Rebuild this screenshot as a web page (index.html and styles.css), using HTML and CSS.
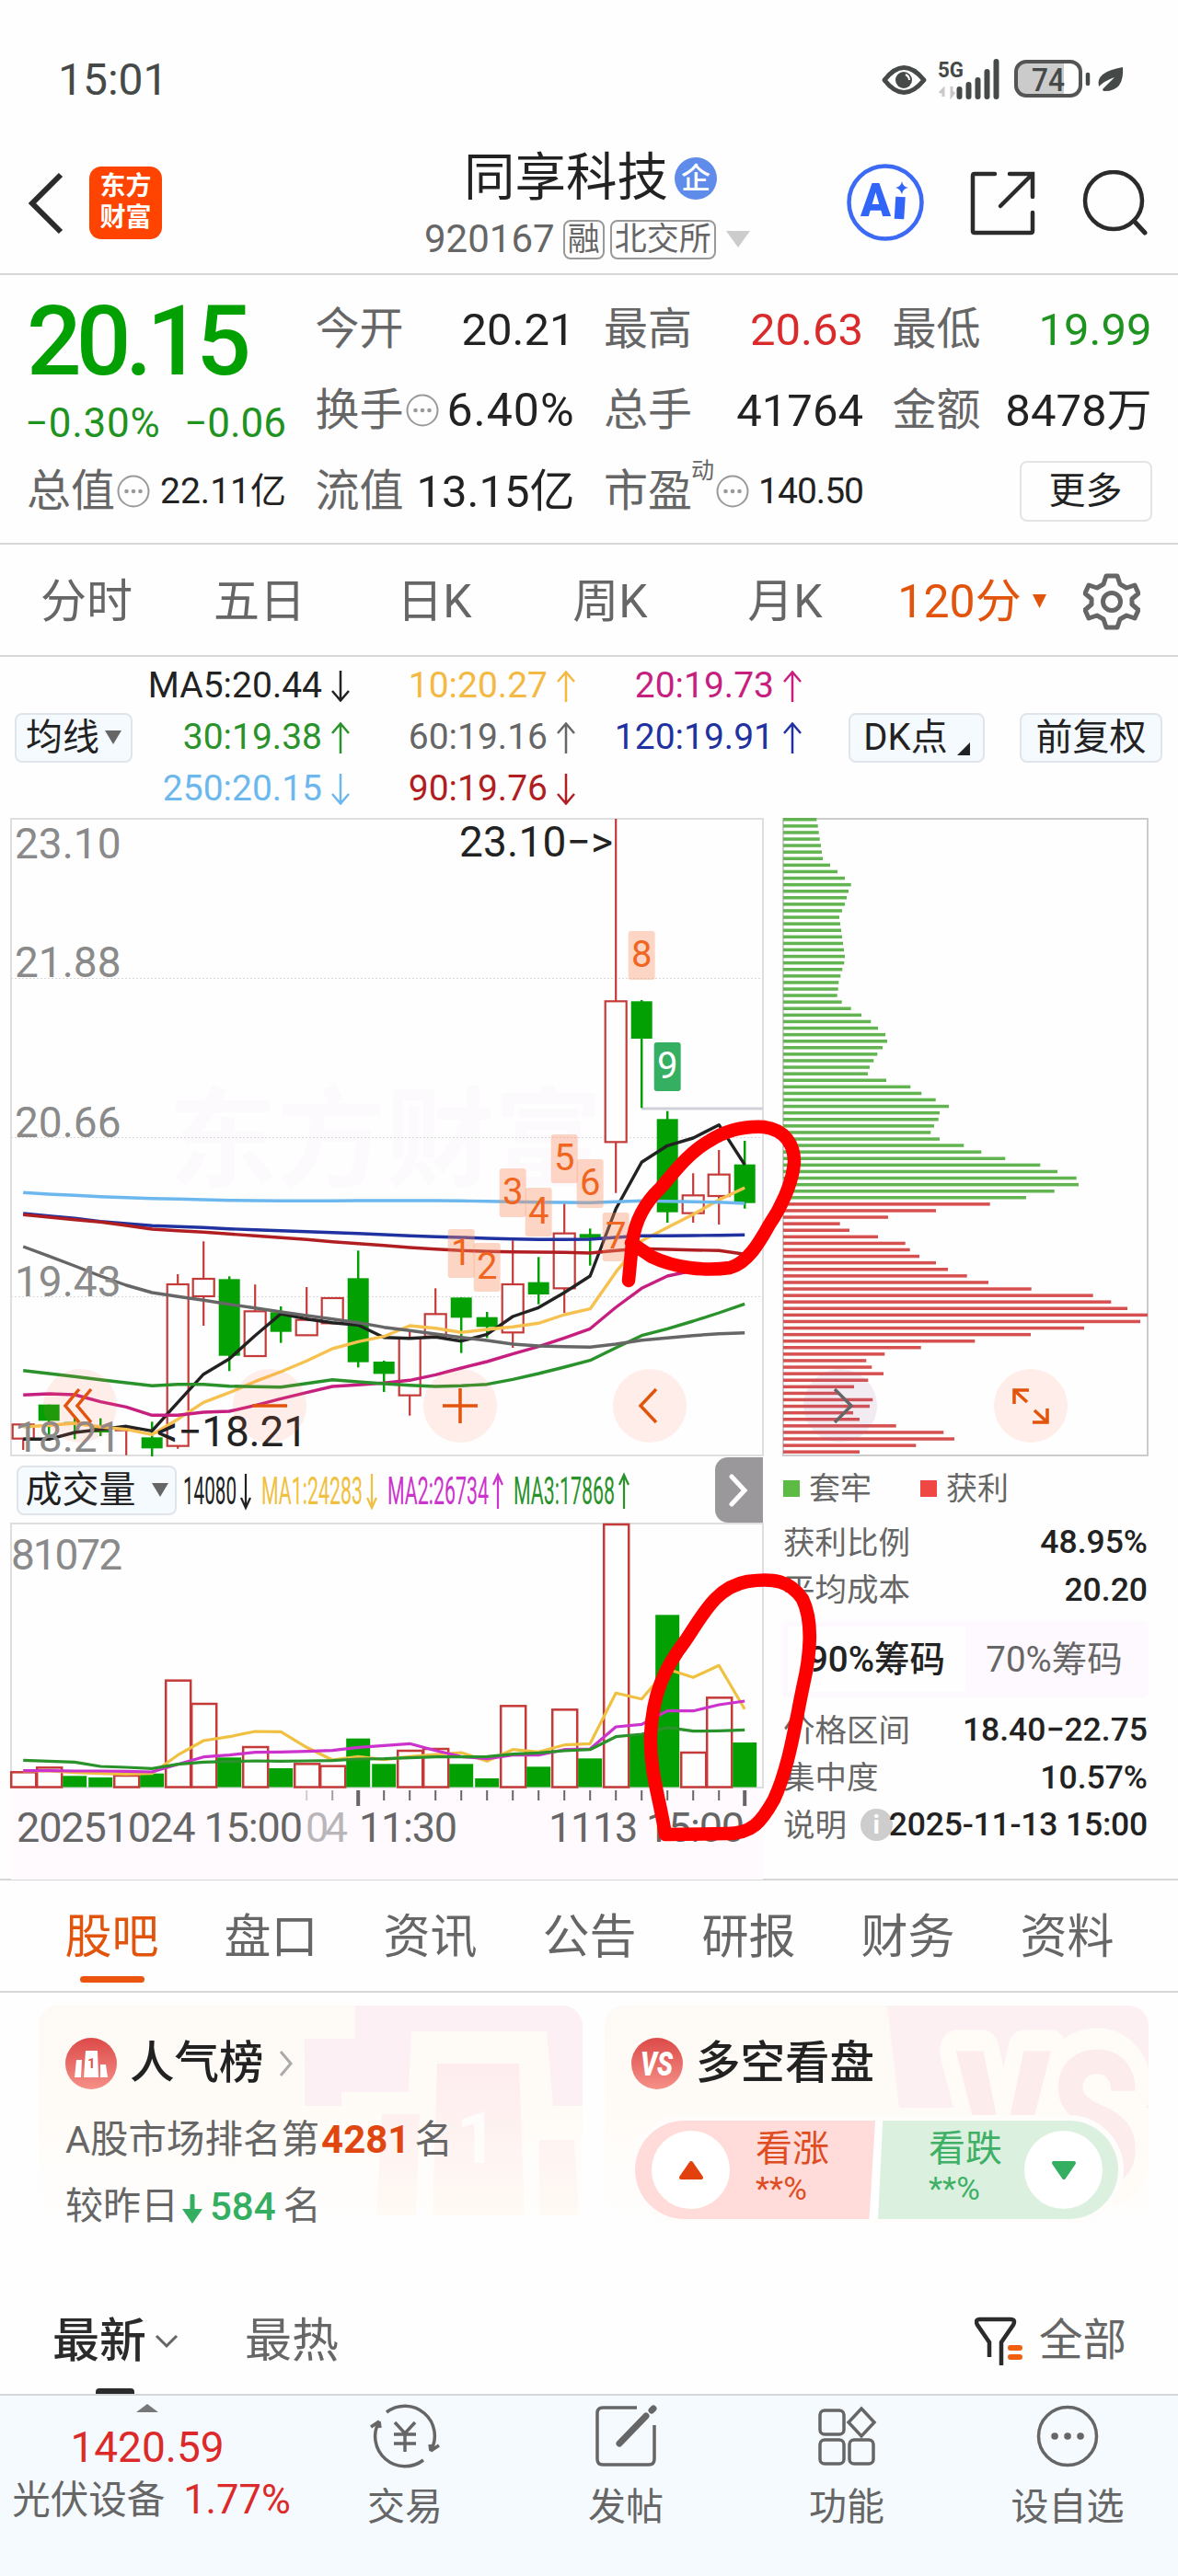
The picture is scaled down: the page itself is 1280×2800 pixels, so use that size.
FILE: index.html
```html
<!DOCTYPE html>
<html lang="zh-CN">
<head>
  <meta charset="UTF-8">
  <meta name="viewport" content="width=device-width, initial-scale=1">
  <title>同享科技 920167</title>
  <link rel="stylesheet" href="styles.css">
</head>
<body>
  <!-- Shared symbols -->
  <svg class="defs" width="0" height="0">
    <symbol id="down" viewBox="0 0 20 34"><path d="M10 0V32M1 22L10 32.500L19 22" fill="none" stroke="currentColor" stroke-width="2.500"/></symbol>
    <symbol id="up" viewBox="0 0 20 34"><path d="M10 34V2M1 12L10 1.500L19 12" fill="none" stroke="currentColor" stroke-width="2.500"/></symbol>
    <symbol id="dots" viewBox="0 0 36 36">
      <circle cx="18" cy="18" r="16.500" fill="none" stroke="#999" stroke-width="2"/>
      <circle cx="10.500" cy="18" r="2.300" fill="#999"/><circle cx="18" cy="18" r="2.300" fill="#999"/><circle cx="25.500" cy="18" r="2.300" fill="#999"/>
    </symbol>
  </svg>

  <div class="status-bar">
    <span class="clock">15:01</span>
    <svg width="270" height="50" viewBox="955 60 270 50">
      <path d="M961 87Q982 60 1004 87Q982 114 961 87Z" fill="none" stroke="#454947" stroke-width="5" stroke-linejoin="round"/>
      <circle cx="982" cy="87" r="9" fill="#454947"/><path d="M984 81q4 2 4 6" stroke="#fff" stroke-width="2" fill="none"/>
      <text x="1019" y="84" class="net" textLength="28" lengthAdjust="spacingAndGlyphs">5G</text>
      <path d="M1021 101l4-4v8M1034 94v10l3-4" stroke="#cbc6ca" stroke-width="3" fill="none"/>
      <path d="M1042.500 97V105M1052.500 92V105M1062.500 87V105M1072.500 78V105M1082.500 67V105" stroke="#454947" stroke-width="6" stroke-linecap="round"/>
      <rect x="1104" y="68" width="70" height="37" rx="11" fill="#fff"/>
      <path d="M1115 68h41v37h-41q-11 0-11-11v-15q0-11 11-11z" fill="#cbcbcb"/>
      <rect x="1104" y="67" width="70" height="37" rx="11" fill="none" stroke="#555" stroke-width="4"/>
      <text x="1121" y="99" class="battery" textLength="36" lengthAdjust="spacingAndGlyphs">74</text>
      <path d="M1182 81V91" stroke="#454947" stroke-width="4.500" stroke-linecap="round"/>
      <path d="M1194 94Q1190 78 1220 73Q1222 100 1199 99L1198 97L1211 84Q1200 88 1194 94Z" fill="#454947"/>
    </svg>
  </div>

  <header class="top-bar">
    <div class="top-left">
      <svg width="40" height="70" viewBox="0 0 40 70"><path d="M36 5L5 36L36 67" fill="none" stroke="#2b2b2b" stroke-width="6"/></svg>
      <div class="logo">东方<br>财富</div>
    </div>
    <div class="title">
      <div class="stock-name">同享科技<span class="badge-qi">企</span></div>
      <div class="stock-code">
        <span>920167</span><span class="tag">融</span><span class="tag">北交所</span>
        <svg width="26" height="18" viewBox="0 0 26 18"><path d="M0 0H26L13 18Z" fill="#ccc"/></svg>
      </div>
    </div>
    <div class="top-icons">
      <svg width="86" height="86" viewBox="0 0 86 86">
        <circle cx="42" cy="42" r="39.500" fill="none" stroke="#3c69f5" stroke-width="4.500"/>
        <text x="15" y="57" class="ai" textLength="33" lengthAdjust="spacingAndGlyphs">A</text>
        <path d="M58.500 36L57 60" stroke="#3165f8" stroke-width="10.500"/>
        <path d="M60 19Q61 25 67 26Q61 27 60 33Q58 27 53 26Q59 25 60 19Z" fill="#3165f8"/>
      </svg>
      <svg width="72" height="72" viewBox="0 0 72 72"><path d="M27 4H5Q3 4 3 6V66Q3 68 5 68H66Q68 68 68 66V46M43 4H68V29M66 6L33 39" fill="none" stroke="#2b2b2b" stroke-width="4.500" stroke-linecap="round"/></svg>
      <svg width="74" height="74" viewBox="0 0 74 74"><circle cx="35" cy="33" r="31" fill="none" stroke="#2b2b2b" stroke-width="4.500"/><path d="M57 55L69 68" stroke="#2b2b2b" stroke-width="5" stroke-linecap="round"/></svg>
    </div>
  </header>

  <section class="quote">
    <div class="price-cell">
      <div class="price">20.15</div>
      <div class="change"><span>−0.30%</span><span>−0.06</span></div>
    </div>
    <div class="stat"><span>今开</span><b>20.21</b></div>
    <div class="stat"><span>最高</span><b class="red">20.63</b></div>
    <div class="stat"><span>最低</span><b class="green">19.99</b></div>
    <div class="stat"><span>换手<svg class="more-dots"><use href="#dots"/></svg></span><b class="wide">6.40%</b></div>
    <div class="stat"><span>总手</span><b>41764</b></div>
    <div class="stat"><span>金额</span><b>8478万</b></div>
    <div class="stat"><span>总值<svg class="more-dots"><use href="#dots"/></svg></span><b class="small">22.11亿</b></div>
    <div class="stat"><span>流值</span><b>13.15亿</b></div>
    <div class="stat"><span>市盈<sup>动</sup><svg class="more-dots"><use href="#dots"/></svg></span><b class="small tight">140.50</b></div>
    <div class="stat end"><button class="more-btn">更多</button></div>
  </section>

  <nav class="period-tabs">
    <span>分时</span><span>五日</span><span>日K</span><span>周K</span><span>月K</span>
    <span class="active">120分<svg width="15" height="15" viewBox="0 0 15 15"><path d="M0 0H15L7.500 15Z" fill="#e2530c"/></svg></span>
    <svg width="62" height="62" viewBox="-31 -31 62 62">
      <path fill="none" stroke="#666" stroke-width="5" stroke-linejoin="round" d="M-6 -28H6L9 -19L16 -15L25 -18L29 -9L22 -3V3L29 9L25 18L16 15L9 19L6 28H-6L-9 19L-16 15L-25 18L-29 9L-22 3V-3L-29 -9L-25 -18L-16 -15L-9 -19Z"/>
      <circle r="9.500" fill="none" stroke="#666" stroke-width="5"/>
    </svg>
  </nav>

  <section class="charts">
    <div class="ma-bar">
      <button class="chip">均线<i class="tri"></i></button>
      <div class="ma-list">
        <span class="ma5">MA5:20.44<svg><use href="#down"/></svg></span>
        <span class="ma10">10:20.27<svg><use href="#up"/></svg></span>
        <span class="ma20">20:19.73<svg><use href="#up"/></svg></span>
        <span class="ma30">30:19.38<svg><use href="#up"/></svg></span>
        <span class="ma60">60:19.16<svg><use href="#up"/></svg></span>
        <span class="ma120">120:19.91<svg><use href="#up"/></svg></span>
        <span class="ma250">250:20.15<svg><use href="#down"/></svg></span>
        <span class="ma90">90:19.76<svg><use href="#down"/></svg></span>
      </div>
      <button class="chip dk">DK点<i class="corner"></i></button>
      <button class="chip fq">前复权</button>
    </div>

    <div class="chart-grid">
      <div class="left-col">
        <svg id="kline" width="838" height="695" viewBox="0 888 838 695"></svg>
        <div class="vol-bar">
          <button class="chip">成交量<i class="tri"></i></button>
          <svg class="vol-ma" width="490" height="50" viewBox="198 1593 490 50">
            <g fill="#222" color="#222"><text x="199" y="1633" textLength="58" lengthAdjust="spacingAndGlyphs">14080</text><path d="M267 1600V1637M262 1626L267 1637L272 1626"/></g>
            <g fill="#f0c040" color="#f0c040"><text x="284" y="1633" textLength="110" lengthAdjust="spacingAndGlyphs">MA1:24283</text><path d="M404 1600V1637M399 1626L404 1637L409 1626"/></g>
            <g fill="#cc33cc" color="#cc33cc"><text x="421" y="1633" textLength="110" lengthAdjust="spacingAndGlyphs">MA2:26734</text><path d="M541 1638V1601M536 1612L541 1601L546 1612"/></g>
            <g fill="#2a922a" color="#2a922a"><text x="558" y="1633" textLength="110" lengthAdjust="spacingAndGlyphs">MA3:17868</text><path d="M678 1638V1601M673 1612L678 1601L683 1612"/></g>
          </svg>
          <button class="expand"><svg width="22" height="36" viewBox="0 0 22 36"><path d="M3 3L17 18L3 33" fill="none" stroke="#fff" stroke-width="5" stroke-linecap="round"/></svg></button>
        </div>
        <svg id="volume" width="838" height="388" viewBox="0 1654 838 388"></svg>
      </div>

      <div class="right-col">
        <svg id="chips" width="402" height="695" viewBox="848 888 402 695"></svg>
        <div class="legend"><i class="sq g"></i><span>套牢</span><i class="sq r"></i><span>获利</span></div>
        <div class="info"><span>获利比例</span><b>48.95%</b></div>
        <div class="info"><span>平均成本</span><b>20.20</b></div>
        <div class="seg"><span class="on">90%筹码</span><span>70%筹码</span></div>
        <div class="info"><span>价格区间</span><b>18.40−22.75</b></div>
        <div class="info"><span>集中度</span><b>10.57%</b></div>
        <div class="info"><span>说明</span><i class="tip">i</i><b class="time">2025-11-13 15:00</b></div>
      </div>
    </div>

    <!-- Hand-drawn marks over both charts -->
    <svg class="ink" width="1280" height="1330" viewBox="0 713 1280 1330">
      <path d="M683 1391L687 1350C690 1325 702 1305 718 1290C732 1274 748 1252 771 1239C790 1227 812 1223 830 1224C853 1227 863 1243 863 1262C861 1287 847 1314 836 1330C825 1350 812 1372 793 1377C765 1381 733 1377 708 1365L686 1350"/>
      <path d="M723 1993C716 1950 706 1925 707 1885C709 1840 722 1812 745 1782C764 1754 778 1724 812 1718C841 1714 858 1717 872 1737C884 1762 880 1800 873 1830C864 1872 858 1918 841 1955C827 1980 817 1992 790 1992L723 1993"/>
    </svg>
  </section>

  <nav class="info-tabs">
    <span class="active">股吧</span><span>盘口</span><span>资讯</span><span>公告</span><span>研报</span><span>财务</span><span>资料</span>
  </nav>

  <section class="cards">
    <div class="card">
      <svg class="card-art" width="591" height="240" viewBox="0 0 591 240">
        <defs>
          <linearGradient id="fade" x2="0" y2="1"><stop stop-color="#fdecee"/><stop offset="1" stop-color="#fffaf4"/></linearGradient>
          <linearGradient id="redg" x2="0" y2="1"><stop stop-color="#dc4a48"/><stop offset="1" stop-color="#f59088"/></linearGradient>
        </defs>
        <path d="M344 0H591V109H559L552 28H405L402 94H329V109H289V36H344Z" fill="#fdf0f4"/>
        <path d="M433 63H522L528 228H428ZM373 118H414L410 228H367ZM544 146H582L587 228H544Z" fill="url(#fade)"/>
        <text x="454" y="171" class="art-num">1</text>
      </svg>
      <h3>
        <svg width="56" height="56" viewBox="0 0 56 56"><circle cx="28" cy="28" r="28" fill="url(#redg)"/><path d="M12 24h6l-1 19h-7zM38 29h6l2 14h-8zM22 14h13l1 29H20z" fill="#fff"/><text x="24" y="33" class="icon-num">1</text></svg>
        人气榜
        <svg class="arrow" width="16" height="28" viewBox="0 0 16 28"><path d="M2 1L13 14L2 27" fill="none" stroke="#aaa" stroke-width="3"/></svg>
      </h3>
      <p class="rank">A股市场排名第<b>4281</b>名</p>
      <p class="diff">较昨日<svg width="24" height="32" viewBox="0 0 24 32"><path d="M12 2V22" stroke="#34ae60" stroke-width="5" stroke-linecap="round"/><path d="M1 16H23L12 32Z" fill="#34ae60"/></svg><b>584</b>名</p>
    </div>
    <div class="card">
      <svg class="card-art" width="591" height="240" viewBox="0 0 591 240">
        <path d="M307 0H591V111H320Z" fill="#fdf0f3"/>
        <text x="382" y="195" class="art-vs" textLength="200" lengthAdjust="spacingAndGlyphs">VS</text>
      </svg>
      <h3>
        <svg width="56" height="56" viewBox="0 0 56 56"><circle cx="28" cy="28" r="28" fill="url(#redg)"/><text x="10" y="41" class="icon-vs" textLength="35" lengthAdjust="spacingAndGlyphs">VS</text></svg>
        多空看盘
      </h3>
      <div class="vote">
        <div class="up"><i><svg width="28" height="22" viewBox="0 0 28 22"><path d="M14 3L25 19H3Z" fill="#e2410e" stroke="#e2410e" stroke-width="4" stroke-linejoin="round"/></svg></i><span>看涨<small>**%</small></span></div>
        <div class="down"><span>看跌<small>**%</small></span><i><svg width="28" height="22" viewBox="0 0 28 22"><path d="M14 19L3 3H25Z" fill="#34ae60" stroke="#34ae60" stroke-width="4" stroke-linejoin="round"/></svg></i></div>
      </div>
    </div>
  </section>

  <section class="feed-bar">
    <span class="newest">最新<svg width="26" height="16" viewBox="0 0 26 16"><path d="M2 2L13 13L24 2" fill="none" stroke="#666" stroke-width="3"/></svg></span>
    <span class="hottest">最热</span>
    <span class="filter">
      <svg width="52" height="54" viewBox="0 0 52 54"><path d="M16 44V28L3 9Q0 3 6 3H39Q45 3 42 9L29 28V53" fill="none" stroke="#2b2b2b" stroke-width="4.500"/><path d="M39 34H49M39 44H49" stroke="#f0600c" stroke-width="6" stroke-linecap="round"/></svg>
      全部
    </span>
  </section>

  <footer class="bottom-nav">
    <div class="index">
      <svg width="24" height="9" viewBox="0 0 24 9"><path d="M12 0L24 9H0Z" fill="#777"/></svg>
      <b>1420.59</b>
      <p>光伏设备<b>1.77%</b></p>
    </div>
    <div class="nav-item">
      <svg width="80" height="72" viewBox="-40 -36 80 72" class="line">
        <path d="M-20 -26A32.500 32.500 0 0 1 28 16L37 10M28 16L27 9M20 26A32.500 32.500 0 0 1 -28 -16L-37 -10M-28 -16L-27 -9"/>
        <path d="M-11 -15L0 -3L11 -15M0 -3V17M-12 -2H12M-12 8H12"/>
      </svg>
      交易
    </div>
    <div class="nav-item">
      <svg width="80" height="72" viewBox="-40 -36 80 72" class="line">
        <path d="M12 -31H-25Q-31 -31 -31 -25V25Q-31 31 -25 31H25Q31 31 31 25V-12"/>
        <path d="M-7 8L22 -22" stroke-width="7" stroke-linecap="round"/><path d="M28 -28L30 -30" stroke-width="7" stroke-linecap="round"/>
      </svg>
      发帖
    </div>
    <div class="nav-item">
      <svg width="80" height="72" viewBox="-40 -36 80 72" class="line">
        <rect x="-29" y="-28" width="26" height="26" rx="5"/><rect x="-29" y="4" width="26" height="26" rx="5"/><rect x="3" y="4" width="26" height="26" rx="5"/>
        <path d="M16 -30L30 -15L16 0L2 -15Z"/>
      </svg>
      功能
    </div>
    <div class="nav-item">
      <svg width="80" height="72" viewBox="-40 -36 80 72" class="line">
        <circle r="31.500"/><path d="M-14 0h.1M0 0h.1M14 0h.1" stroke-width="7.500" stroke-linecap="round"/>
      </svg>
      设自选
    </div>
  </footer>

  <script src="charts.js"></script>
</body>
</html>
```
FILE: styles.css
```css
:root {
  --text: #222;
  --gray: #666;
  --line: #d5d6d8;
  --up: #d92b2b;
  --down: #1f931f;
  --accent: #e2530c;
}

* {
  box-sizing: border-box;
}

body {
  margin: 0;
  width: 1280px;
  height: 2800px;
  overflow-x: hidden;
  background: #fefefe;
  color: var(--text);
  font-family: Roboto, "Noto Sans CJK SC", sans-serif;
  line-height: 1;
}

svg {
  display: block;
  flex: none;
}

.defs {
  position: absolute;
}

button {
  font: inherit;
  color: inherit;
  padding: 0;
  margin: 0;
  background: none;
}

b {
  font-weight: 400;
}

.red { color: var(--up); }
.green { color: var(--down); }

/* status bar */
.status-bar {
  height: 150px;
  padding: 60px 55px 0 63px;
  display: flex;
  justify-content: space-between;
}

.clock {
  font-size: 48px;
  line-height: 54px;
  color: #454947;
}

.net { font: 700 24px Roboto; fill: #454947; }
.battery { font: 500 35px Roboto; fill: #454947; }

/* top bar */
.top-bar {
  height: 149px;
  border-bottom: 2px solid var(--line);
  display: grid;
  grid-template-columns: 400px 1fr 400px;
}

.top-left {
  display: flex;
  padding: 31px 0 0 30px;
  gap: 27px;
  align-items: flex-start;
}

.top-left > svg {
  margin-top: 4px;
}

.logo {
  width: 79px;
  height: 79px;
  border-radius: 13px;
  background: #fe4400;
  color: #fff;
  font-size: 28px;
  font-weight: 700;
  line-height: 34px;
  text-align: center;
  padding-top: 5px;
}

.title {
  padding-top: 12px;
}

.stock-name {
  display: flex;
  align-items: center;
  font-size: 55.5px;
  line-height: 64px;
  padding-left: 104px;
}

.badge-qi {
  width: 46px;
  height: 46px;
  margin-left: 7px;
  border-radius: 50%;
  background: #5f8cea;
  color: #fff;
  font-size: 32px;
  font-weight: 500;
  line-height: 46px;
  text-align: center;
}

.stock-code {
  display: flex;
  align-items: center;
  margin-top: 9px;
  padding-left: 61px;
  font-size: 42px;
  height: 50px;
  color: var(--gray);
}

.tag {
  height: 43px;
  margin-left: 9px;
  padding: 0 3px;
  border: 2px solid #999;
  border-radius: 8px;
  font-size: 35px;
  line-height: 39px;
}

.tag + .tag {
  margin-left: 6px;
}

.stock-code svg {
  margin-left: 11px;
}

.top-icons {
  display: flex;
  padding: 28px 0 0 40px;
}

.top-icons svg + svg {
  margin: 7px 0 0 48px;
}

.top-icons svg:last-child {
  margin-left: 49px;
}

.ai { font: 900 50px Roboto; fill: #3165f8; }

/* quote */
.quote {
  height: 293px;
  padding: 15px 28px 0 29px;
  border-bottom: 2px solid var(--line);
  display: grid;
  grid-template-columns: repeat(4, 282px);
  grid-template-rows: repeat(3, 88px);
  column-gap: 31.5px;
}

.price-cell {
  grid-row: 1 / 3;
}

.price {
  font-size: 105px;
  font-weight: 500;
  letter-spacing: -6px;
  line-height: 115px;
  color: #02a002;
}

.change {
  display: flex;
  justify-content: space-between;
  margin-left: -2px;
  font-size: 44px;
  line-height: 62px;
  color: var(--down);
}

.change span:first-child {
  letter-spacing: 0.7px;
}

.stat {
  display: flex;
  justify-content: space-between;
  align-items: center;
  font-size: 48px;
  white-space: nowrap;
}

.stat > span {
  display: flex;
  align-items: center;
  color: var(--gray);
}

.stat b {
  font-size: 49px;
}

.stat b.wide {
  font-size: 50px;
  letter-spacing: 1px;
}

.stat b.small {
  font-size: 39px;
}

.stat b.tight {
  letter-spacing: -1px;
}

.stat sup {
  font-size: 25px;
  margin: -46px 0 0 -1px;
}

.more-dots {
  width: 36px;
  height: 36px;
  margin-left: 2px;
}

.end {
  justify-content: flex-end;
}

.more-btn {
  width: 144px;
  height: 66px;
  border: 2px solid #e4e4e6;
  border-radius: 8px;
  font-size: 40px;
}

/* period tabs */
.period-tabs {
  height: 122px;
  padding-top: 3px;
  border-bottom: 2px solid var(--line);
  display: grid;
  grid-template-columns: 188px 188px 192px 190px 190px 216px 88px;
  align-items: center;
  justify-items: center;
  font-size: 50px;
  color: var(--gray);
}

.period-tabs .active {
  display: flex;
  align-items: center;
  gap: 12px;
  color: var(--accent);
}

/* charts */
.charts {
  position: relative;
  height: 1330px;
  border-bottom: 2px solid var(--line);
}

.ink {
  position: absolute;
  left: 0;
  top: 0;
  fill: none;
  stroke: #f00;
  stroke-width: 14.5;
  stroke-linecap: round;
  stroke-linejoin: round;
}

.ma-bar {
  height: 175px;
  padding-left: 16px;
  display: flex;
  align-items: center;
}

.chip {
  height: 54px;
  width: 128px;
  border: 2px solid #dfe5ea;
  border-radius: 8px;
  background: #f5faff;
  font-size: 40px;
  display: flex;
  align-items: center;
  justify-content: center;
  flex: none;
}

.tri {
  margin-left: 6px;
  border: 9px solid transparent;
  border-top: 15px solid #666;
  border-bottom: 0;
}

.dk {
  width: 148px;
  margin-left: 51px;
}

.corner {
  align-self: flex-end;
  margin: 0 0 6px 10px;
  border: 7px solid transparent;
  border-right-color: #222;
  border-bottom-color: #222;
}

.fq {
  width: 155px;
  margin-left: 38px;
}

.ma-list {
  display: grid;
  grid-template-columns: 236px 245px 246px;
  grid-template-rows: repeat(3, 56px);
  font-size: 39px;
}

.ma-list span {
  display: flex;
  align-items: center;
  justify-content: flex-end;
}

.ma-list svg {
  width: 20px;
  height: 34px;
  margin-left: 10px;
}

.ma5 { color: #222; }
.ma10 { color: #f4b942; }
.ma20 { color: #c71f7f; }
.ma30 { color: #2a922a; }
.ma60 { color: #666; }
.ma120 { color: #1f32a0; }
.ma250 { color: #6cb8ee; }
.ma90 { color: #b01e22; }

.chart-grid {
  display: grid;
  grid-template-columns: 848px 402px;
}

.vol-bar {
  height: 71px;
  padding-left: 18px;
  display: flex;
  align-items: center;
}

.vol-bar .chip {
  width: 174px;
}

.vol-bar .tri {
  margin-left: 17px;
}

.vol-ma {
  margin-left: 6px;
  font-size: 42px;
}

.vol-ma path {
  fill: none;
  stroke: currentColor;
  stroke-width: 2.2;
}

.expand {
  width: 52px;
  height: 71px;
  margin-left: 89px;
  border: 0;
  border-radius: 14px 0 0 14px;
  background: #9a989b;
  display: flex;
  align-items: center;
  justify-content: center;
}

.axis { font-size: 46px; fill: #8a8a8a; }
.mark { font-size: 46px; fill: #222; }
.date { font-size: 45px; fill: #666; }
.tag-num { font-size: 40px; text-anchor: middle; }
.watermark { font-size: 118px; font-weight: 700; fill: #fdfafd; }

.legend {
  height: 67px;
  padding-left: 3px;
  display: flex;
  align-items: center;
  font-size: 34px;
  color: var(--gray);
}

.sq {
  width: 18px;
  height: 18px;
  margin-right: 10px;
}

.sq.g { background: #5cbb42; }
.sq.r { background: #ee4744; margin-left: 53px; }

.info {
  height: 51.5px;
  padding: 0 3px;
  display: flex;
  align-items: center;
  justify-content: space-between;
  font-size: 35px;
  white-space: nowrap;
}

.info span {
  font-size: 34.5px;
  color: var(--gray);
}

.info b {
  font-weight: 500;
  font-size: 35.5px;
}

.info .time {
  letter-spacing: -0.2px;
}

.seg {
  height: 83px;
  margin: 8px 2px 10px;
  padding: 6px;
  border-radius: 6px;
  background: #fdf9fe;
  display: grid;
  grid-template-columns: 1fr 1fr;
  font-size: 38.5px;
  line-height: 71px;
  text-align: center;
  color: var(--gray);
}

.seg .on {
  background: #fefefe;
  font-weight: 500;
  color: var(--text);
}

.tip {
  width: 35px;
  height: 35px;
  margin: 0 -4px 0 auto;
  border-radius: 50%;
  background: #cdcdcd;
  color: #fff;
  font: 700 28px/35px Roboto;
  text-align: center;
}

/* info tabs */
.info-tabs {
  height: 122px;
  padding-left: 35px;
  border-bottom: 2px solid var(--line);
  display: grid;
  grid-template-columns: repeat(7, 173px);
  font-size: 51px;
  line-height: 123px;
  text-align: center;
  color: var(--gray);
}

.info-tabs .active {
  color: var(--accent);
}

.info-tabs .active::after {
  content: "";
  display: block;
  width: 70px;
  height: 7px;
  margin: -19px auto 0;
  border-radius: 4px;
  background: #ea540e;
}

/* cards */
.cards {
  padding: 14px 32px 0 42px;
  display: grid;
  grid-template-columns: 591px 591px;
  gap: 24px;
  height: 316px;
}

.card {
  position: relative;
  height: 240px;
  padding: 34px 29px 0;
  border-radius: 22px;
  overflow: hidden;
  background: linear-gradient(#fdf9f5, #fffcf8 55%, #fefefe);
}

.card-art {
  position: absolute;
  left: 0;
  top: 0;
}

.art-num { font: 700 77px Roboto; fill: #fffdfc; }
.art-vs { font: 900 205px Roboto; fill: #fdecec; stroke: #fffcf7; stroke-width: 46px; stroke-linejoin: round; paint-order: stroke; }
.icon-num { font: 700 15px Roboto; fill: #df5651; }
.icon-vs { font: italic 900 36px Roboto; fill: #fff; }

.card h3 {
  position: relative;
  display: flex;
  align-items: center;
  margin: 0;
  font-size: 48.5px;
  font-weight: 500;
  height: 58px;
}

.card h3 svg:first-child {
  margin-right: 14px;
}

.card .arrow {
  margin-left: 16px;
}

.card p {
  position: relative;
  display: flex;
  align-items: center;
  margin: 0;
  padding-top: 18px;
  height: 89px;
  font-size: 41.5px;
  color: var(--gray);
}

.card p b {
  font-size: 42px;
}

.rank b {
  margin: 0 5px 0 2px;
  font-weight: 700;
  color: #e0460f;
}

.card .diff {
  height: 57px;
  font-size: 41px;
}

.diff svg {
  margin: 4px 7px 0 3px;
}

.diff b {
  margin-right: 8px;
  font-weight: 500;
  color: #34ae60;
}

.vote {
  position: relative;
  display: flex;
  gap: 3px;
  width: 525px;
  height: 107px;
  margin: 33px 0 0 4px;
  border-radius: 54px;
  overflow: hidden;
  background: #fff;
  box-shadow: 0 0 0 6px #fffdfc;
  line-height: 50px;
  font-size: 40px;
}

.vote div {
  display: flex;
  align-items: center;
  width: 261px;
}

.vote span {
  margin-top: -8px;
}

.vote i {
  width: 85px;
  height: 85px;
  border-radius: 50%;
  background: #fff;
  display: flex;
  align-items: center;
  justify-content: center;
}

.vote small {
  display: block;
  font-size: 35px;
  line-height: 38px;
}

.vote .up {
  padding-left: 18px;
  gap: 28px;
  color: #e04c22;
  background: #ffdcda;
  clip-path: polygon(0 0, 100% 0, 97.5% 100%, 0 100%);
}

.vote .down {
  justify-content: flex-end;
  padding-right: 17px;
  gap: 24px;
  color: #40b067;
  background: #dbf0de;
  clip-path: polygon(2% 0, 100% 0, 100% 100%, 0 100%);
}

/* feed tabs */
.feed-bar {
  height: 120px;
  padding: 5px 56px 0 57px;
  display: flex;
  align-items: center;
  font-size: 51px;
  color: var(--gray);
}

.newest {
  position: relative;
  display: flex;
  align-items: center;
  gap: 9px;
  font-weight: 500;
  color: #2b2b2b;
}

.newest::after {
  content: "";
  position: absolute;
  left: 47px;
  top: 77px;
  width: 42px;
  height: 6px;
  border-radius: 4px 4px 0 0;
  background: #2b2b2b;
}

.hottest {
  margin-left: 72px;
}

.filter {
  margin-left: auto;
  display: flex;
  align-items: center;
  gap: 18px;
  font-size: 47.5px;
}

/* bottom nav */
.bottom-nav {
  height: 199px;
  border-top: 2px solid var(--line);
  background: #f5fafe;
  display: grid;
  grid-template-columns: 320px repeat(4, 240px);
}

.index {
  padding-top: 9px;
  display: flex;
  flex-direction: column;
  align-items: center;
  color: #dc2a2a;
}

.index > b {
  margin-top: 11px;
  font-size: 46px;
  line-height: 54px;
}

.index p {
  margin: 0;
  padding-left: 9px;
  display: flex;
  gap: 20px;
  align-items: center;
  font-size: 41.5px;
  line-height: 61px;
  color: var(--gray);
}

.index p b {
  font-size: 43.5px;
  color: #dc2a2a;
}

.nav-item {
  display: flex;
  flex-direction: column;
  align-items: center;
  padding-top: 8px;
  font-size: 41px;
  line-height: 82px;
  color: var(--gray);
}

.line {
  fill: none;
  stroke: #666;
  stroke-width: 3.5;
}
```
FILE: charts.js
```js
const GREEN = "#02a002";
const RED = "#c33a38";
const step = 28;
const cx = i => 25.2 + i * step;

function line(values, y, color, width) {
  const pts = values.map((v, i) => cx(i).toFixed(1) + "," + y(v).toFixed(1)).join(" ");
  return `<polyline points="${pts}" fill="none" stroke="${color}" stroke-width="${width}" stroke-linejoin="round"/>`;
}

// K line: [up, high, low, bodyTop, bodyBottom]
const candles = [
  [1, 1192, 1275, 1192, 1238], [0, 1127, 1225, 1127, 1180], [0, 1165, 1240, 1184, 1188], [0, 1172, 1230, 1200, 1218],
  [1, 1200, 1292, 1205, 1206], [0, 1183, 1296, 1234, 1270], [1, 702, 1271, 735, 1262], [1, 595, 870, 717, 774],
  [0, 709, 1018, 718, 968], [1, 736, 968, 823, 969], [0, 807, 926, 826, 890], [1, 744, 901, 851, 901],
  [1, 780, 862, 780, 862], [0, 625, 1006, 715, 989], [0, 984, 1086, 987, 1027], [1, 888, 1163, 910, 1097],
  [1, 748, 905, 832, 905], [0, 778, 959, 778, 844], [0, 825, 910, 842, 874], [1, 592, 942, 735, 892],
  [0, 646, 800, 728, 768], [1, 472, 828, 569, 748], [0, 553, 674, 571, 584], [1, -783, 437, -188, 271],
  [0, -192, 160, -188, -66], [0, 170, 534, 196, 500], [1, 373, 534, 445, 503], [1, 297, 540, 377, 447],
  [0, 267, 488, 344, 470]
];

const ma = [
  ["#222", [1240, 1240, 1218, 1208, 1198, 1213, 1120, 1028, 978, 902, 831, 848, 860, 868, 908, 911, 907, 920, 898, 840, 811, 762, 708, 489, 337, 283, 258, 215, 345]],
  ["#f7c14f", [1200, 1195, 1188, 1200, 1208, 1225, 1175, 1120, 1088, 1052, 1020, 985, 945, 922, 905, 870, 878, 892, 882, 874, 862, 834, 815, 695, 593, 550, 507, 460, 420]],
  ["#c71f7f", [1096, 1092, 1095, 1118, 1135, 1162, 1162, 1152, 1149, 1130, 1108, 1088, 1068, 1063, 1057, 1048, 1030, 1008, 987, 962, 938, 910, 880, 810, 748, 708, 690, 682, 675]],
  ["#2a922a", [1016, 1026, 1036, 1046, 1056, 1066, 1061, 1061, 1067, 1069, 1070, 1058, 1046, 1053, 1059, 1064, 1068, 1066, 1061, 1045, 1026, 1005, 983, 942, 902, 880, 855, 828, 799]],
  ["#6cb8ee", [436, 441, 445, 449, 452, 455, 457, 459, 461, 462, 463, 463, 463, 462, 462, 462, 462, 463, 464, 466, 467, 468, 469, 466, 463, 464, 466, 467, 471]],
  ["#1f32a0", [504, 512, 520, 530, 537, 544, 547, 550, 554, 557, 560, 563, 566, 569, 573, 577, 580, 582, 585, 587, 589, 589, 588, 582, 577, 577, 576, 575, 574]],
  ["#b01e22", [508, 516, 524, 532, 543, 555, 560, 565, 571, 577, 583, 589, 596, 602, 608, 615, 620, 625, 628, 629, 630, 631, 633, 625, 619, 621, 623, 625, 637]],
  ["#666", [612, 643, 675, 708, 738, 762, 775, 787, 800, 812, 825, 837, 848, 860, 875, 886, 897, 908, 918, 930, 936, 938, 940, 930, 917, 910, 902, 896, 893]]
];

// count tags: number, candle index, top
const tags = [[1, 17, 1335], [2, 18, 1350], [3, 19, 1269], [4, 20, 1290], [5, 21, 1232], [6, 22, 1259], [7, 23, 1317], [8, 24, 1011], [9, 25, 1132]];

function roundButton(x, path, color = "#e2530c", fill = "#fb7050") {
  return `<circle cx="${x}" cy="1527" r="40" fill="${fill}" fill-opacity=".12"/>
    <path transform="translate(${x} 1527)" d="${path}" fill="none" stroke="${color}" stroke-width="3.500"/>`;
}

function drawKline() {
  const y = v => 1150 + v / 3;
  let s = `<text class="watermark" x="183" y="1280" textLength="472">东方财富</text>`;
  s += `<path d="M12 889H829V1581H12Z" fill="none" stroke="#dedede" stroke-width="2"/>`;
  [1062, 1235, 1408].forEach(g => {
    s += `<path d="M12 ${g}.500H829" stroke="#d8d8d8" stroke-dasharray="2 2"/>`;
  });
  s += `<path d="M697 1204H829" stroke="#d0d0da" stroke-width="3"/>`;
  candles.forEach(([up, hi, lo, t, b], i) => {
    const x = cx(i);
    const h = Math.max(y(b) - y(t), 2);
    if (up) {
      s += `<path d="M${x} ${y(hi)}V${y(t)}M${x} ${y(b)}V${y(lo)}" stroke="${RED}" stroke-width="2.200"/>
        <rect x="${x - 11.5}" y="${y(t)}" width="23" height="${h}" fill="#fefefe" stroke="${RED}" stroke-width="2.200"/>`;
    } else {
      s += `<path d="M${x} ${y(hi)}V${y(lo)}" stroke="${GREEN}" stroke-width="2.500"/>
        <rect x="${x - 11.5}" y="${y(t)}" width="23" height="${h}" fill="${GREEN}"/>`;
    }
  });
  ma.forEach(([color, values]) => { s += line(values, y, color, 3.4); });
  [["23.10", 932], ["21.88", 1061], ["20.66", 1235], ["19.43", 1408], ["18.21", 1577]].forEach(([t, ty]) => {
    s += `<text class="axis" x="16" y="${ty}">${t}</text>`;
  });
  s += `<text class="mark" x="499" y="930" textLength="167">23.10−&gt;</text>`;
  s += `<text class="mark" x="170" y="1571" textLength="164">&lt;−18.21</text>`;
  tags.forEach(([n, i, top]) => {
    const last = n === 9;
    s += `<rect x="${cx(i) - 14.5}" y="${top}" width="29" height="53" rx="3" fill="${last ? "#35b063" : "#fa8f62"}" fill-opacity="${last ? 1 : 0.37}"/>
      <text class="tag-num" x="${cx(i)}" y="${top + 39}" fill="${last ? "#fff" : "#f0651f"}">${n}</text>`;
  });
  s += roundButton(87, "M-1 -18L-16 0L-1 18M12 -18L-3 0L12 18");
  s += roundButton(293, "M-19 0H19");
  s += roundButton(500, "M-19 0H19M0 -19V19");
  s += roundButton(706, "M7 -18L-10 0L7 18");
  document.getElementById("kline").innerHTML = s;
}

// volume bars: [up, top]
const volumes = [
  [1, 1036], [1, 1021], [0, 1048], [0, 1053], [1, 1047], [0, 1040], [1, 737], [1, 813], [0, 988], [1, 954],
  [0, 1023], [1, 1009], [1, 1016], [0, 926], [0, 1009], [1, 966], [1, 960], [0, 1009], [0, 1056], [1, 820],
  [0, 1018], [1, 832], [0, 991], [1, 228], [0, 912], [0, 523], [1, 972], [1, 793], [0, 939]
];

const volMa = [
  ["#f0c040", [1032, 1032, 1037, 1040, 1042, 1040, 980, 933, 920, 903, 904, 955, 996, 985, 995, 985, 978, 972, 1000, 962, 970, 947, 943, 778, 797, 700, 727, 688, 830]],
  ["#cc33cc", [1031, 1031, 1032, 1032, 1033, 1035, 1010, 986, 980, 971, 970, 968, 965, 955, 949, 943, 965, 985, 992, 980, 980, 962, 960, 888, 880, 836, 836, 816, 804]],
  ["#2a922a", [997, 1000, 1003, 1017, 1020, 1024, 1010, 1003, 1001, 999, 1000, 999, 998, 993, 992, 989, 986, 986, 985, 977, 973, 966, 962, 920, 912, 890, 902, 901, 898]]
];

function drawVolume() {
  const y = v => 1580 + v / 3;
  let s = `<rect x="12" y="1943" width="817" height="99" fill="#fefafe"/>`;
  s += `<path d="M12 1655H829V1942H12Z" fill="none" stroke="#dedede" stroke-width="2"/>`;
  volumes.forEach(([up, t], i) => {
    const h = 1941.5 - y(t);
    s += up
      ? `<rect x="${cx(i) - 13}" y="${y(t)}" width="27" height="${h}" fill="#fefefe" stroke="${RED}" stroke-width="2.500"/>`
      : `<rect x="${cx(i) - 13}" y="${y(t)}" width="26" height="${h}" fill="${GREEN}"/>`;
  });
  volMa.forEach(([color, values]) => { s += line(values, y, color, 3.2); });
  for (let i = 11; i < 29; i++) {
    const major = i === 13 || i === 28;
    s += `<path d="M${cx(i)} 1945V${major ? 1962 : 1956}" stroke="#666" stroke-width="${major ? 4 : 2}" opacity="${i < 13 ? (i - 10) * 0.3 : 1}"/>`;
  }
  s += `<text class="axis" x="12" y="1705" textLength="121">81072</text>
    <text class="date" x="18" y="2001" textLength="311">20251024 15:00</text>
    <text class="date" x="332" y="2001" textLength="46" opacity=".45">04</text>
    <text class="date" x="390" y="2001" textLength="107">11:30</text>
    <text class="date" x="596" y="2001" textLength="213">1113 15:00</text>`;
  document.getElementById("volume").innerHTML = s;
}

// chip distribution, bar end positions from top price to bottom price
const trapped = [171, 175, 178, 181, 185, 188, 191, 215, 239, 263, 283, 275, 269, 263, 254, 245, 248, 251, 254, 257,
  260, 263, 261, 255, 249, 243, 241, 238, 253, 283, 317, 348, 371, 395, 401, 386, 369, 357, 344, 338,
  398, 477, 513, 559, 602, 572, 568, 554, 543, 572, 651, 708, 786, 900, 956, 1018, 1025, 946, 854];
const profit = [736, 560, 404, 247, 278, 371, 460, 475, 506, 560, 599, 661, 731, 871, 1072, 1131, 1184, 1250, 1226, 1043,
  869, 687, 511, 393, 333, 351, 389, 339, 293, 245, 354, 344, 290, 311, 430, 585, 620, 495, 311];

function drawChips() {
  let s = `<path d="M851 889H1247V1581H851Z" fill="none" stroke="#ccc" stroke-width="2"/>`;
  trapped.concat(profit).forEach((v, i) => {
    const color = i < trapped.length ? "#62b450" : "#d6504f";
    s += `<rect x="851" y="${(888 + i * 7.087).toFixed(1)}" width="${((v - 62) / 3).toFixed(1)}" height="3.500" fill="${color}"/>`;
  });
  s += roundButton(913, "M-6 -18L12 0L-6 18", "#666", "#a060a0");
  s += roundButton(1120, "M-18 -2V-17H-2M-17 -16L-4 -4M18 3V18H2M17 17L4 5");
  document.getElementById("chips").innerHTML = s;
}

drawKline();
drawVolume();
drawChips();
```
